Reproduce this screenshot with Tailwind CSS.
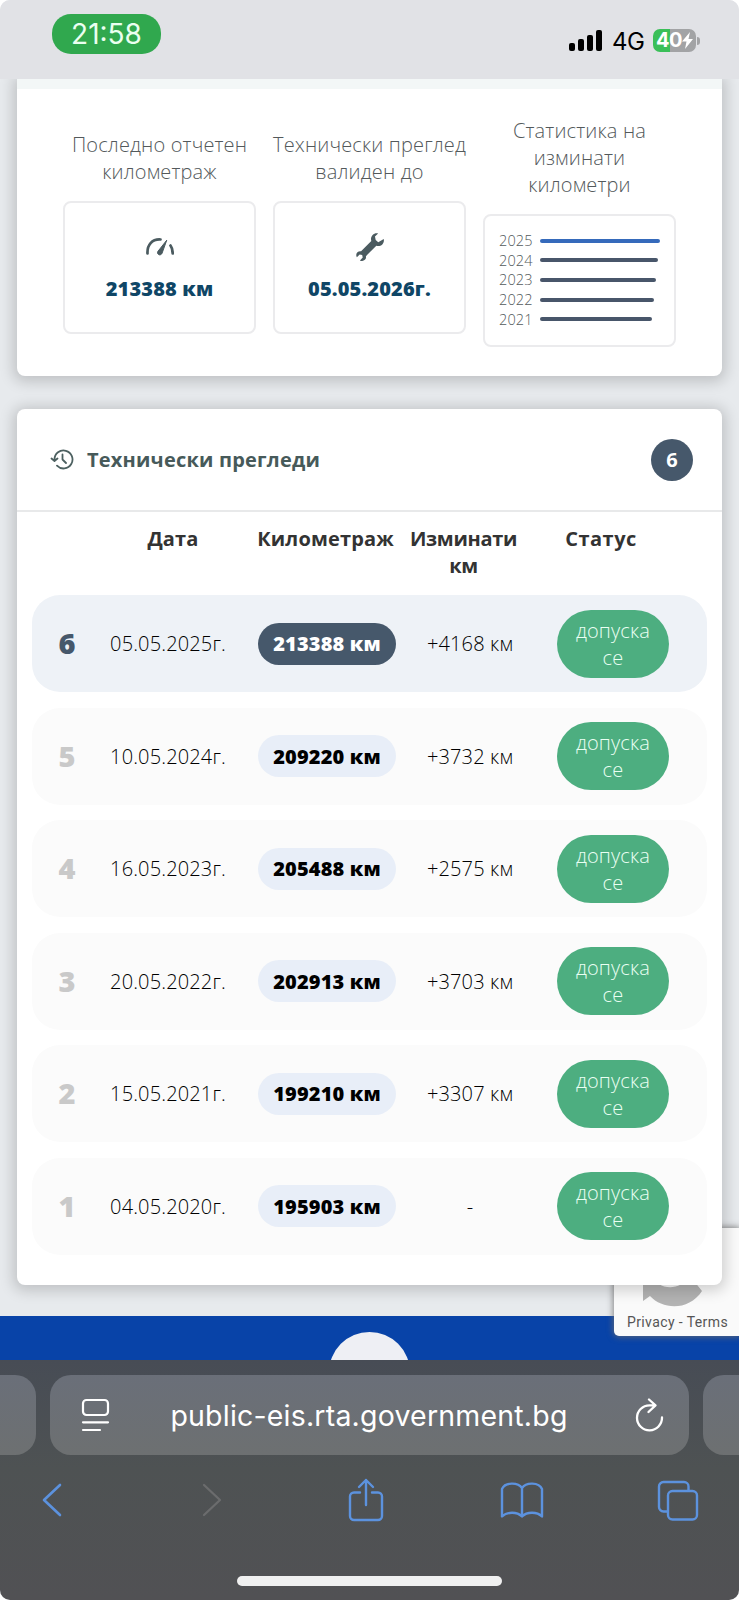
<!DOCTYPE html>
<html lang="bg">
<head>
    <meta charset="UTF-8">
    <meta name="viewport" content="width=device-width, initial-scale=1.0">
    <title>Технически прегледи</title>
    <script src="https://cdn.jsdelivr.net/npm/@tailwindcss/browser@4"></script>
</head>
<body class="bg-white">
    <div class="relative flex h-[1600px] w-[739px] flex-col overflow-hidden rounded-[10px] bg-[#e7eaed] font-['Open_Sans','Noto_Sans',sans-serif] text-[20px] leading-[27px] font-light tracking-[0.150px]">

        <!-- Status Bar -->
        <header class="z-20 flex h-[79px] shrink-0 items-start justify-between bg-[#e1e2e6] pr-[43px] pl-[52px] font-[Inter,sans-serif]">
            <div class="mt-[14px] flex h-[40px] w-[109px] items-center justify-center rounded-[19px] bg-[#30a84e] text-[28px] font-normal tracking-normal text-[#eafff0]">21:58</div>
            <div class="mt-[29px] flex h-[23px] items-center text-black">
                <svg class="h-[21px] w-[33px]" viewBox="0 0 33 21" fill="currentColor">
                    <rect x="0" y="13" width="6" height="8" rx="2"></rect>
                    <rect x="9" y="9" width="6" height="12" rx="2"></rect>
                    <rect x="18" y="5" width="6" height="16" rx="2"></rect>
                    <rect x="27" y="0" width="6" height="21" rx="2"></rect>
                </svg>
                <span class="mt-[2px] ml-[10px] w-[32px] text-[24px] font-normal tracking-[-0.5px]">4G</span>
                <div class="ml-[9px] flex h-[23px] w-[43px] items-center justify-center rounded-[7px] bg-linear-to-r from-[#3abf58] from-40% to-[#a2a3a5] to-40% text-[20px] font-bold text-white">
                    <span class="tracking-[-0.5px]">40</span>
                    <svg class="h-[17px] w-[11px]" viewBox="0 0 11 17" fill="currentColor"><path d="M8 0 0 9.500h4.500L3 17l8-10H6.500z"></path></svg>
                </div>
                <span class="-mr-[4px] ml-[1px] h-[8px] w-[3px] rounded-r-full bg-[#a2a3a5]"></span>
            </div>
        </header>

        <!-- Summary Card -->
        <section class="mx-[17px] flex h-[297px] shrink-0 flex-col rounded-b-[8px] bg-white text-[#53595b] shadow-[0_2px_14px_4px_rgba(0,0,0,0.17)]">
            <div class="h-[10px] bg-[#f3f7f7]"></div>
            <div class="flex items-start gap-[17px] px-[46px] text-center">
                <div class="w-[193px] pt-[42px]">
                    <p class="-mx-2 h-[54px] whitespace-nowrap">Последно отчетен<br>километраж</p>
                    <div class="mt-[16px] flex h-[133px] flex-col items-center rounded-[8px] border-2 border-[#ebebed] pt-[35px]">
                        <svg class="h-[18px] w-[28px]" viewBox="0 0 28 18" fill="none" stroke="#4b5b60" stroke-width="2.700" stroke-linecap="round">
                            <path d="M1.500 15.500C1 7 6 1 14.500 1.500M24.500 7.500c1.600 2.200 2.200 5 2.200 8"></path>
                            <path d="M20.500 2.500 12.200 13a2.300 2.300 0 1 0 3.800 2.400z" fill="#4b5b60" stroke-width="1"></path>
                        </svg>
                        <p class="mt-[19px] font-extrabold whitespace-nowrap text-[#0f4666]">213388 км</p>
                    </div>
                </div>
                <div class="w-[193px] pt-[42px]">
                    <p class="-mx-2 h-[54px] whitespace-nowrap">Технически преглед<br>валиден до</p>
                    <div class="mt-[16px] flex h-[133px] flex-col items-center rounded-[8px] border-2 border-[#ebebed] pt-[30px]">
                        <svg class="h-[28px] w-[28px]" viewBox="0 0 512 512" fill="#4b5b60">
                            <path transform="matrix(-1 0 0 1 512 0)" d="M5 110c-9 34 0 72 26 99 30 30 73 38 110 24l190 190c-7 30 1 50 19 68 25 25 62 27 90 10l-51-51 10-46 46-10 51 51c18-30 15-67-10-92-17-17-42-25-66-20L232 145c13-37 5-80-24-110C181 8 143 0 108 9l57 57-13 62-47 39z"></path>
                        </svg>
                        <p class="mt-[14px] font-extrabold whitespace-nowrap text-[#0f4666]">05.05.2026г.</p>
                    </div>
                </div>
                <div class="w-[193px] pt-[28px]">
                    <p class="h-[81px]">Статистика на<br>изминати<br>километри</p>
                    <div class="mt-[16px] flex h-[133px] flex-col rounded-[8px] border-2 border-[#ebebed] pt-[15px] pl-[14px] text-[14.500px]">
                        <div class="flex h-[19.600px] items-center gap-[8px]"><span class="w-[33px]">2025</span><i class="h-[4px] w-[120px] rounded-full bg-[#356abb]"></i></div>
                        <div class="flex h-[19.600px] items-center gap-[8px]"><span class="w-[33px]">2024</span><i class="h-[4px] w-[118px] rounded-full bg-[#48566a]"></i></div>
                        <div class="flex h-[19.600px] items-center gap-[8px]"><span class="w-[33px]">2023</span><i class="h-[4px] w-[116px] rounded-full bg-[#48566a]"></i></div>
                        <div class="flex h-[19.600px] items-center gap-[8px]"><span class="w-[33px]">2022</span><i class="h-[4px] w-[114px] rounded-full bg-[#48566a]"></i></div>
                        <div class="flex h-[19.600px] items-center gap-[8px]"><span class="w-[33px]">2021</span><i class="h-[4px] w-[112px] rounded-full bg-[#48566a]"></i></div>
                    </div>
                </div>
            </div>
        </section>

        <!-- Inspections Card -->
        <section class="z-10 mx-[17px] mt-[33px] h-[876px] shrink-0 rounded-[8px] bg-white shadow-[0_2px_14px_4px_rgba(0,0,0,0.17)]">
            <div class="flex h-[103px] items-center border-b-2 border-[#e8e9ea] pr-[29px] pl-[33px]">
                <svg class="h-[21px] w-[24px]" viewBox="0 0 24 21" fill="none" stroke="#4c6060" stroke-width="1.800" stroke-linecap="round" stroke-linejoin="round">
                    <path d="M4.500 10.500a9 9 0 1 1 2.500 6.200M1.500 9.500l3 2.500 3-2.500M12.500 5.500v5l3.500 3.500"></path>
                </svg>
                <h2 class="ml-[13px] text-[20px] font-bold tracking-[0.200px] text-[#475a5a]">Технически прегледи</h2>
                <span class="ml-auto flex size-[42px] items-center justify-center rounded-full bg-[#46586b] text-[20px] font-bold text-white">6</span>
            </div>
            <div class="grid h-[83px] grid-cols-[72px_168px_137px_139px_136px] pt-[13px] text-center text-[20px] font-bold text-[#333]">
                <span></span>
                <span>Дата</span>
                <span class="whitespace-nowrap">Километраж</span>
                <span class="tracking-[-0.300px]">Изминати<br>км</span>
                <span class="tracking-[0.500px]">Статус</span>
            </div>
            <div id="rows" class="flex flex-col gap-[15.500px] px-[15px]"></div>
        </section>

        <!-- Footer -->
        <footer class="mt-[31px] flex h-[44px] shrink-0 justify-center overflow-hidden bg-[#0843a8] pt-[16px]">
            <div class="size-[81px] shrink-0 rounded-full bg-[#eeeff4]"></div>
        </footer>

        <!-- reCAPTCHA badge -->
        <div class="absolute top-[1228px] right-0 flex h-[108px] w-[125px] flex-col items-center rounded-l-[5px] bg-[#fafafa] pt-[32px] shadow-[0_0_6px_1px_rgba(110,110,110,0.8)]">
            <svg class="mr-[7px] h-[48px] w-[60px] shrink-0" viewBox="0 0 60 48">
                <path d="M0 24v17l7-5c13 14 39 15 52-5L47 16c-8 12-22 14-31 8l5-5z" fill="#b3b3b3"></path>
            </svg>
            <p class="mt-[1px] pl-[2px] font-[Roboto,sans-serif] text-[14px] leading-[27px] font-normal tracking-[0.400px] whitespace-nowrap text-[#555]">Privacy - Terms</p>
        </div>

        <!-- Browser Toolbar -->
        <nav class="z-20 flex h-[240px] shrink-0 flex-col bg-linear-to-b from-[#474c55] via-[#4e5253] via-45% to-[#515154] font-[Inter,sans-serif]">
            <div class="mt-[15px] flex h-[80px] shrink-0 gap-[14px]">
                <div class="w-[36px] shrink-0 rounded-r-[21px] bg-linear-to-b from-[#6a6f79] to-[#6d7071]"></div>
                <div class="flex w-[639px] shrink-0 items-center rounded-[21px] bg-linear-to-b from-[#6a6f79] to-[#6d7071] pr-[24px] pl-[31px] text-white">
                    <svg class="h-[34px] w-[29px] shrink-0" viewBox="0 0 29 34" fill="none" stroke="currentColor" stroke-width="2.200" stroke-linecap="round">
                        <rect x="2" y="2" width="25" height="15" rx="3.500"></rect>
                        <path d="M2 24.300h25M2 32h17"></path>
                    </svg>
                    <span class="flex-1 pr-[7px] text-center text-[28.500px] font-normal tracking-[0.200px] whitespace-nowrap">public-eis.rta.government.bg</span>
                    <svg class="h-[34px] w-[30px] shrink-0" viewBox="0 0 30 34" fill="none" stroke="currentColor" stroke-width="2.300" stroke-linecap="round" stroke-linejoin="round">
                        <path d="M20 7.300H14.500A12.500 12.500 0 1 0 27 19.500M14 1.500l6.500 5.800-7 6.700"></path>
                    </svg>
                </div>
                <div class="w-[36px] shrink-0 rounded-l-[21px] bg-linear-to-b from-[#6a6f79] to-[#6d7071]"></div>
            </div>
            <div class="mt-[22px] flex h-[46px] items-center pr-[40px] pl-[41px] text-[#5c92de]">
                <svg class="h-[34px] w-[22px]" viewBox="0 0 22 34" fill="none" stroke="currentColor" stroke-width="2.600" stroke-linecap="round" stroke-linejoin="round"><path d="M19 2 3 17l16 15"></path></svg>
                <svg class="ml-[138px] h-[34px] w-[22px] text-[#6b6c6d]" viewBox="0 0 22 34" fill="none" stroke="currentColor" stroke-width="2.300" stroke-linecap="round" stroke-linejoin="round"><path d="m3 2 16 15L3 32"></path></svg>
                <svg class="ml-[124px] h-[44px] w-[38px]" viewBox="0 0 38 44" fill="none" stroke="currentColor" stroke-width="2.400" stroke-linecap="round" stroke-linejoin="round">
                    <path d="M13 14.500H7a4 4 0 0 0-4 4V38a4 4 0 0 0 4 4h24a4 4 0 0 0 4-4V18.500a4 4 0 0 0-4-4h-6M19 27V2M12 9l7-7 7 7"></path>
                </svg>
                <svg class="ml-[115px] h-[38px] w-[44px]" viewBox="0 0 44 38" fill="none" stroke="currentColor" stroke-width="2.400" stroke-linecap="round" stroke-linejoin="round">
                    <path d="M22 7v28.500c-5-5-15-5-20 0V8C5 1 18 1 22 7c4-6 17-6 20 1v27.500c-5-5-15-5-20 0"></path>
                </svg>
                <svg class="ml-auto h-[41px] w-[42px]" viewBox="0 0 42 41" fill="none" stroke="currentColor" stroke-width="2.400" stroke-linejoin="round">
                    <rect x="11" y="11" width="29" height="28.500" rx="4.500"></rect>
                    <path d="M11 31.500H6.500a4.500 4.500 0 0 1-4.500-4.500V6.500A4.500 4.500 0 0 1 6.500 2H27a4.500 4.500 0 0 1 4.500 4.500V11"></path>
                </svg>
            </div>
            <div class="mt-[53px] ml-[237px] h-[10px] w-[265px] shrink-0 rounded-full bg-[#f0f0f0]"></div>
        </nav>
    </div>

    <script>
        const inspections = [
            [6, '05.05.2025г.', '213388 км', '+4168 км'],
            [5, '10.05.2024г.', '209220 км', '+3732 км'],
            [4, '16.05.2023г.', '205488 км', '+2575 км'],
            [3, '20.05.2022г.', '202913 км', '+3703 км'],
            [2, '15.05.2021г.', '199210 км', '+3307 км'],
            [1, '04.05.2020г.', '195903 км', '-'],
        ];

        document.getElementById('rows').innerHTML = inspections.map(([no, date, km, diff], i) => `
            <div class="grid h-[97px] grid-cols-[70px_132px_24px_138px_148px_13px_112px] items-center rounded-[28px] text-center text-black ${i === 0 ? 'bg-[#eef2f7]' : 'bg-[#fbfbfb]'}">
                <span class="pb-[2px] text-[29px] font-extrabold ${i === 0 ? 'text-[#46586b]' : 'text-[#c9c9c9]'}">${no}</span>
                <span class="whitespace-nowrap">${date}</span>
                <span></span>
                <span class="flex h-[42px] items-center justify-center rounded-full font-extrabold whitespace-nowrap ${i === 0 ? 'bg-[#46586b] text-white' : 'bg-[#e8eef8]'}">${km}</span>
                <span class="whitespace-nowrap">${diff}</span>
                <span></span>
                <span class="flex h-[68px] items-center justify-center rounded-full bg-[#4dae80] text-[#eafff3]">допуска<br>се</span>
            </div>
        `).join('');
    </script>
</body>
</html>
